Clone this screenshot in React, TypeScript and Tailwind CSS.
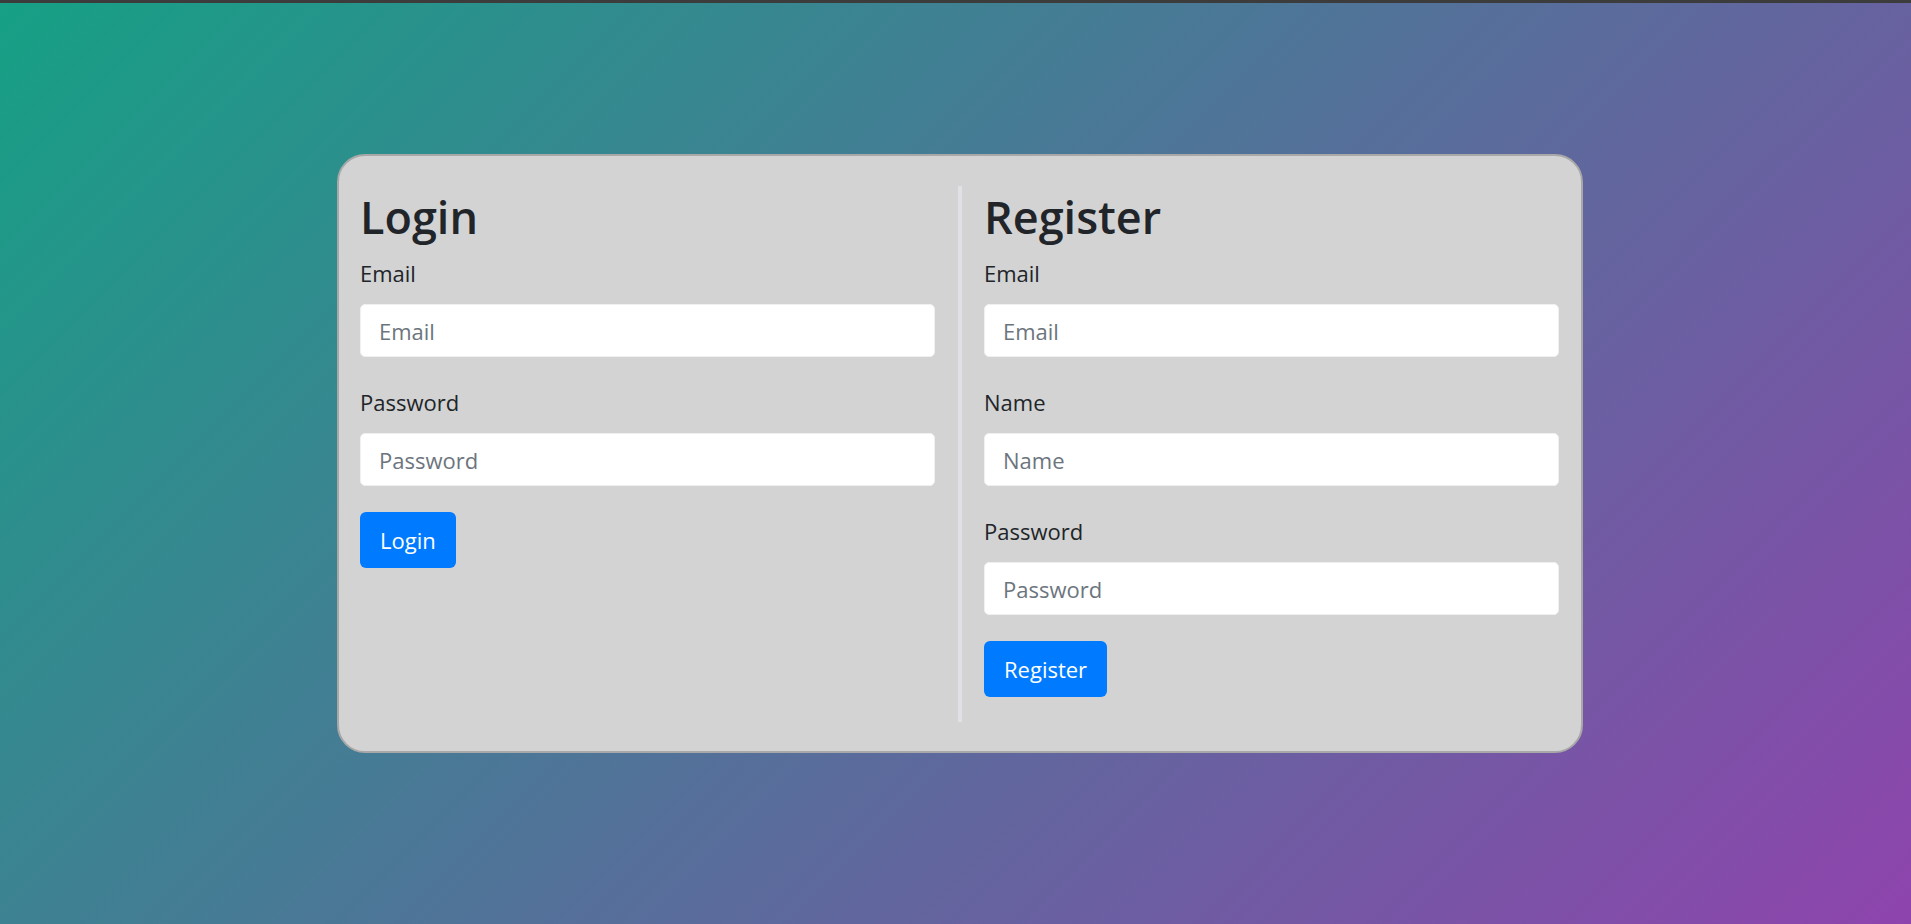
import type { ReactNode } from 'react';

// Auth screen: login + register side by side on a gradient card.

type FieldProps = {
  label: string;
  type?: string;
  last?: boolean;
};

function Field({ label, type = 'text', last = false }: FieldProps) {
  return (
    <div className={last ? 'mb-[26px]' : 'mb-[29px]'}>
      <label className="block text-[22px] leading-[33px] text-[#212529] mb-[14px]">{label}</label>
      <input
        type={type}
        placeholder={label}
        className="block h-[53px] w-full rounded-[5px] border border-[#eef0f2] bg-white pl-[18px] pr-[16px] text-[22px] text-[#495057] placeholder:text-[#6c757d] outline-none"
      />
    </div>
  );
}

function Column({ title, children, button }: { title: string; children: ReactNode; button: string }) {
  return (
    <div className="flex w-[575px] flex-col">
      <h1 className="mb-[10px] text-[45px] font-semibold leading-[61px] text-[#212529]">{title}</h1>
      {children}
      <div>
        <button
          type="button"
          className="h-[56px] rounded-[6px] bg-[#007bff] px-[20px] text-[22px] leading-none text-white"
        >
          {button}
        </button>
      </div>
    </div>
  );
}

export default function App() {
  return (
    <div
      className="flex h-[924px] w-full flex-col overflow-hidden"
      style={{ fontFamily: '"Open Sans", "Noto Sans", sans-serif' }}
    >
      <div className="h-[3px] shrink-0 bg-[#3c3c3c]" />
      <main className="flex flex-1 justify-center bg-[linear-gradient(135deg,#16a085,#8e44ad)] pl-[9px] pt-[151px]">
        <div className="h-[599px] w-[1246px] rounded-[28px] border-2 border-[#a8a8a8] bg-[#d3d3d3] pb-[29px] pl-[21px] pr-[22px] pt-[30px]">
          <div className="flex h-[536px] items-start">
            <Column title="Login" button="Login">
              <Field label="Email" type="email" />
              <Field label="Password" type="password" last />
            </Column>
            <div className="ml-[23px] mr-[22px] h-full w-[4px] bg-[#dfe1e4]" />
            <Column title="Register" button="Register">
              <Field label="Email" type="email" />
              <Field label="Name" />
              <Field label="Password" type="password" last />
            </Column>
          </div>
        </div>
      </main>
    </div>
  );
}
